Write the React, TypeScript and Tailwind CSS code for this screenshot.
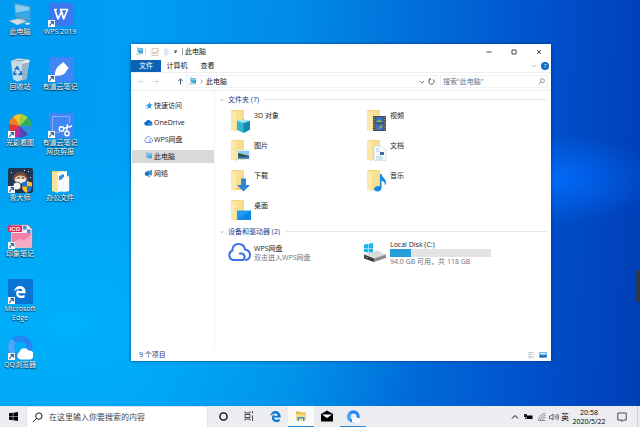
import type { ReactNode } from 'react';

type Item = {
  label: string;
  icon: ReactNode;
  shortcut?: boolean;
};

function PcIcon({ className }: { className: string }) {
  return (
    <svg viewBox="0 0 24 24" className={className}>
      <path d="M6 1 21.500 4v14L7 14z" fill="#5c9fc4" />
      <path d="M7 2.500 20.500 5v11.500L8 13z" fill="#39a9e6" />
      <path d="M7 2.500 20.500 5v3L7.400 10z" fill="#86cdf0" />
      <path d="m12 15 4 1v2.500l-4-1z" fill="#7ba3b9" />
      <path d="m1 18 9-2 8 2.500-9 3.500z" fill="#dfe7eb" stroke="#93aebd" strokeWidth=".6" />
      <path d="M4 18.200 11 17M6.500 19.500l7-1.800M9 20.500l6-2" stroke="#a8bcc7" strokeWidth=".5" />
      <path d="m16 20.500 4-1 1.500 1.500-3.500 1z" fill="#dce8ee" />
    </svg>
  );
}

function RecycleIcon() {
  return (
    <svg viewBox="0 0 25 25" className="size-[25px]">
      <path d="M3 4 21 5.500 18.500 22 9 24.500 5 22z" fill="#c5dce9" />
      <path d="M14 5h7l-2.500 17-4.500 1.500z" fill="#96b5c8" />
      <path d="m3 4 7-2.500L22 3l-1 2.500-7 1.500z" fill="#e7f0f4" stroke="#a4b9c4" strokeWidth=".6" />
      <path d="m6 4 4-1.500L18 3.500 13 5z" fill="#9db0ba" />
      <path d="m7 13 2-3 2 3M12.500 14l1 3-3 .5M8.500 17.500 6 17l.8-3" fill="none" stroke="#1672c4" strokeWidth="1.800" />
    </svg>
  );
}

function WpsIcon() {
  return (
    <svg viewBox="0 0 25 25" className="size-[25px]">
      <rect x="1" y="1" width="24" height="23" rx="1.500" fill="#3b78f0" />
      <path d="M6 7.500h3M6.800 7.500l3.200 9.500 3.600-7.500 2 7.500L19.500 7.500h-7l1.500 3" fill="none" stroke="#fff" strokeWidth="1.700" strokeLinejoin="round" />
    </svg>
  );
}

function NoteIcon() {
  return (
    <svg viewBox="0 0 25 25" className="size-[25px]">
      <rect x="1" width="24" height="25" rx="1" fill="#4285f4" />
      <path d="M7 18.500c-.3-4 1-7 3.500-9.500l5-4 5 6-3.500 5c-2.500 2.500-5.500 3-10 2.500z" fill="#fff" />
    </svg>
  );
}

function PinwheelIcon() {
  return (
    <svg viewBox="0 0 25 25" className="size-[25px]">
      <path d="M12 13 5 3.500A12 12 0 0 1 13 1z" fill="#f7c51e" />
      <path d="M12 13 13 1a12 12 0 0 1 7 3.500z" fill="#a5d32f" />
      <path d="m12 13 8-8.500A12 12 0 0 1 24 13z" fill="#2eae5a" />
      <path d="M12 13h12a12 12 0 0 1-4 8.500z" fill="#2b8fe2" />
      <path d="m12 13 8 8.500A12 12 0 0 1 11 24.500z" fill="#5147b5" />
      <path d="m12 13-1 11.500A12 12 0 0 1 3 20z" fill="#c3279a" />
      <path d="m12 13-9 7a12 12 0 0 1-2-9z" fill="#e8352f" />
      <path d="M12 13 1 11a12 12 0 0 1 4-7.500z" fill="#f57d20" />
    </svg>
  );
}

function ClipIcon() {
  return (
    <svg viewBox="0 0 25 25" className="size-[25px]">
      <rect x="1" width="24" height="25" rx="1" fill="#4285f4" />
      <path d="M21.500 10V3.500H4.500v16h7" fill="none" stroke="#a3c4fb" strokeWidth=".7" />
      <g fill="none" stroke="#fff" strokeWidth="1.400">
        <circle cx="13.500" cy="16" r="2.300" />
        <circle cx="19" cy="20.500" r="2.200" />
        <path d="m15.500 15.500 8.500-2.500M18.500 18.500 19.500 11" />
      </g>
    </svg>
  );
}

function MasterIcon() {
  return (
    <svg viewBox="0 0 25 25" className="size-[25px]">
      <rect width="25" height="25" rx="2" fill="#203651" />
      <path d="M3 4h1v1H3zM20 3h1v1h-1zM6 8h1v1H6zM22 9h1v1h-1zM16 2h1v1h-1z" fill="#dfeaf5" />
      <path d="M5 12c0-5 3-8 7.500-8S20 7 20 12z" fill="#7b4a35" />
      <ellipse cx="12.500" cy="11.500" rx="6" ry="4" fill="#e7c5a6" />
      <path d="M7 12c2-1.500 9-1.500 11 0-1 4-10 4-11 0z" fill="#f2efe9" />
      <path d="M9.500 9.500h2v1h-2zM14 9.500h2v1h-2z" fill="#2b2b2b" />
      <circle cx="9" cy="18" r="4" fill="#f4f4f4" stroke="#2b2b2b" strokeWidth=".7" />
      <path d="M14 14.500 19 13v5.500h-5z" fill="#1b76d1" />
      <path d="m19 13 5 1.500v4h-5z" fill="#f5bf2d" />
      <path d="M14 18.500h5V25c-3-1-5-3-5-6.500z" fill="#f5bf2d" />
      <path d="M19 18.500h5c0 3.500-2 5.500-5 6.500z" fill="#1b76d1" />
    </svg>
  );
}

function PictureFileIcon() {
  return (
    <svg viewBox="0 0 25 25" className="size-[25px]">
      <path d="M3 1h17l4 4v19H3z" fill="#f3e6ee" stroke="#9d8591" strokeWidth=".7" />
      <path d="M4 9h19v13.500H4z" fill="#ef82a6" />
      <path d="m4 19 7-4 5 1 7-5v11.500H4z" fill="#f6aac3" />
      <path d="M15 2h3.500v3.500H15zM19 5.500h3.500V9H19z" fill="#3f8edb" />
      <rect y="1.500" width="14" height="6.500" rx="1" fill="#e3225b" />
      <text x="1.500" y="7" className="fill-white font-['Liberation_Sans',sans-serif] text-[6px] font-bold">ICO</text>
    </svg>
  );
}

function EdgeGlyph({ className, color }: { className: string; color: string }) {
  return (
    <svg viewBox="0 0 24 24" className={className}>
      <path
        fill={color}
        d="M.48 10.840C1.290 4.400 5.700.03 12.200 0c3.930-.08 7.150 1.850 9.070 5.240 1.930 3.540 2.020 5.010 2.020 9.170H8.460c.07 6.020 8.870 5.800 12.700 3.170v4.940c-2.230 1.340-7.260 2.520-11.200 1-3.340-1.250-5.710-4.740-5.680-8.120-.13-4.370 2.190-7.280 5.680-8.890-.74.920-1.300 1.900-1.600 3.700h8.330c.49-4.950-4.690-4.950-4.690-4.950C7.080 5.440 3.560 7.250.48 10.840z"
      />
    </svg>
  );
}

function EdgeIcon() {
  return (
    <span className="flex size-[25px] items-center justify-center bg-[#0a74d6]">
      <EdgeGlyph className="size-3" color="#fff" />
    </span>
  );
}

function QQIcon({ className }: { className: string }) {
  return (
    <svg viewBox="0 0 25 25" className={className}>
      <circle cx="12.500" cy="12.500" r="9" fill="none" stroke="#2386f5" strokeWidth="6" />
      <path d="M6 19A9 9 0 0 1 6 6" fill="none" stroke="#49a8fa" strokeWidth="6" />
      <path d="M12 24.500a4 4 0 0 1-.5-7.500 5 5 0 0 1 9-1.500 4.500 4.500 0 0 1 1.500 9z" fill="#fff" />
    </svg>
  );
}

function OfficeFolderIcon() {
  return (
    <svg viewBox="0 0 25 25" className="size-[25px]">
      <path d="M4 3h12v20H4z" fill="#f4d477" />
      <path d="M9 4.500 19 3v20l-10 1z" fill="#fff" />
      <path d="m11 8 5-2v4l-5 2.500z" fill="#2f8fdb" />
      <path d="M15 9.500 21 8v15l-6 1z" fill="#fafcfd" stroke="#d6dde0" strokeWidth=".5" />
      <path d="m4 3 6 3v19l-6-2z" fill="#f9e29c" />
    </svg>
  );
}

const desktopItems: Item[] = [
  { label: '此电脑', icon: <PcIcon className="size-[25px]" /> },
  { label: '回收站', icon: <RecycleIcon /> },
  { label: '光影看图', icon: <PinwheelIcon />, shortcut: true },
  { label: '鲁大师', icon: <MasterIcon />, shortcut: true },
  { label: '印象笔记', icon: <PictureFileIcon />, shortcut: true },
  { label: 'Microsoft Edge', icon: <EdgeIcon />, shortcut: true },
  { label: 'QQ浏览器', icon: <QQIcon className="size-[25px]" />, shortcut: true },
  { label: 'WPS 2019', icon: <WpsIcon />, shortcut: true },
  { label: '有道云笔记', icon: <NoteIcon />, shortcut: true },
  { label: '有道云笔记网页剪报', icon: <ClipIcon />, shortcut: true },
  { label: '办公文件', icon: <OfficeFolderIcon /> },
];

function DesktopIcon({ item }: { item: Item }) {
  return (
    <button type="button" className="flex min-h-0 w-10 flex-col items-center">
      <span className="relative block">
        {item.icon}
        {item.shortcut ? (
          <svg viewBox="0 0 8 8" className="absolute bottom-0 left-0 size-[7px]">
            <path d="M0 0h8v8H0z" fill="#fff" />
            <path d="M2 7c0-2 .5-3 2.500-3.500M3 1.500h3.500V5z" fill="#17579c" stroke="#17579c" strokeWidth=".8" />
          </svg>
        ) : null}
      </span>
      <span className="text-center text-[7px] leading-[9px] text-white [text-shadow:0_1px_1px_rgba(0,0,0,0.8),0_0_2px_rgba(0,0,0,0.6)]">
        {item.label}
      </span>
    </button>
  );
}

function CloudIcon({ className, strokeWidth }: { className: string; strokeWidth: number }) {
  return (
    <svg viewBox="0 0 24 24" className={className} fill="none" stroke="#3d71e8" strokeWidth={strokeWidth} strokeLinecap="round" strokeLinejoin="round">
      <path d="M15.500 20H6a5 5 0 0 1-.5-9.500C5 6.500 8 4 11.500 4c3.500 0 6 2 6.500 5.500 3 .5 5 2.500 5 5.500s-1.500 4.500-4 5" />
      <path d="M13 13.500c3-.5 4.500 1 4.500 3.500 0 2-1 3-2 3" />
    </svg>
  );
}

const navItems: Item[] = [
  {
    label: '快速访问',
    icon: (
      <svg viewBox="0 0 9 9" className="size-[9px]">
        <path d="m5.500 1 .8 2.300 2.400.2-1.900 1.600.6 2.600-2-1.200-2 1.400.5-2.600L2 3.800l2.500-.3z" fill="#1f95dd" />
        <path d="M1 5h2M1.500 7h1.500" stroke="#6cbcee" strokeWidth=".7" />
      </svg>
    ),
  },
  {
    label: 'OneDrive',
    icon: (
      <svg viewBox="0 0 9 9" className="size-[9px]">
        <path d="M2.500 7.500a2 2 0 0 1-.5-4 2.500 2.500 0 0 1 4.500-.2A2.200 2.200 0 0 1 7 7.500z" fill="#0f69bd" />
        <path d="m2.500 7.500 3-3.200 3 1.500C8.700 7 8 7.500 7 7.500z" fill="#2a95e4" />
      </svg>
    ),
  },
  { label: 'WPS网盘', icon: <CloudIcon className="size-[9px]" strokeWidth={2} /> },
  { label: '此电脑', icon: <PcIcon className="size-[9px]" /> },
  {
    label: '网络',
    icon: (
      <svg viewBox="0 0 9 9" className="size-[9px]">
        <path d="m3 2 5-1v5.500L3 6z" fill="#3d9bd9" />
        <circle cx="3" cy="4.800" r="2.200" fill="#2271b5" />
        <path d="m4.500 6.500 2 .5-1 1.500-2-.5z" fill="#8bb6d0" />
      </svg>
    ),
  },
];

function FolderIcon({ children }: { children: ReactNode }) {
  return (
    <svg viewBox="0 0 24 24" className="size-6 shrink-0">
      <path d="M4 1h13v20H4z" fill="#f5d478" />
      <path d="M7 2h9.500v17H7z" fill="#f9df92" />
      <path d="m4 1 5 3v19l-2-1.500L4 20z" fill="#fbe8ae" />
      {children}
    </svg>
  );
}

const folders: Item[] = [
  {
    label: '3D 对象',
    icon: (
      <FolderIcon>
        <path d="m10 12 6-1.500 7 1.500v8.500L16.500 24 10 21z" fill="#35b6cf" />
        <path d="m10 12 6-1.500 7 1.500-6.500 2z" fill="#a4eaf1" />
        <path d="M16.500 14 23 12v8.500L16.500 24z" fill="#1189a8" />
      </FolderIcon>
    ),
  },
  {
    label: '视频',
    icon: (
      <FolderIcon>
        <path d="M10 7h13v15H10z" fill="#4b4d54" />
        <path d="M12.500 8h8v6h-8z" fill="#3567b5" />
        <path d="M12.500 15h8v6h-8z" fill="#3f6fb8" />
        <path d="m13 13 3-3 4 3zM15 20l3-4 2 2z" fill="#91a64b" />
        <path d="M11 8v13M22 8v13" stroke="#a5a8ae" strokeWidth="1" strokeDasharray="1 1" />
      </FolderIcon>
    ),
  },
  {
    label: '图片',
    icon: (
      <FolderIcon>
        <path d="M10 11h13v9.500H10z" fill="#edf6fb" stroke="#c8d6de" strokeWidth=".4" />
        <path d="M11 12h11v5H11z" fill="#8ecbf3" />
        <path d="m11 14 4 1 7 2v2.500H11z" fill="#32594f" />
        <path d="M11 18h11v1.500H11z" fill="#3b79bd" />
      </FolderIcon>
    ),
  },
  {
    label: '文档',
    icon: (
      <FolderIcon>
        <path d="M11 7h7l5 4v10.500H11z" fill="#f7fbfe" stroke="#c5d7e3" strokeWidth=".6" />
        <path d="M13 10h3M13 12h4M13 18h7M13 20h7" stroke="#8fc0e4" strokeWidth=".8" />
        <path d="M17 13h4v3h-4z" fill="#3c6f9f" />
      </FolderIcon>
    ),
  },
  {
    label: '下载',
    icon: (
      <FolderIcon>
        <path d="M14 9.500h5v6.500h4l-6.500 6.500L10 16h4z" fill="#2e86d8" />
      </FolderIcon>
    ),
  },
  {
    label: '音乐',
    icon: (
      <FolderIcon>
        <path d="M17 5h1.500c0 3 4.500 4.500 4.500 8.500 0 1.500-.5 2.500-1 3 .3-3-1.500-4-3.500-5V19c0 2-1.800 3.500-4 3.500S11 21.500 11 20s2-3 4-3c.8 0 1.500 0 2 .3z" fill="#1789e0" />
      </FolderIcon>
    ),
  },
  {
    label: '桌面',
    icon: (
      <FolderIcon>
        <path d="M10 11.500h14V21H10z" fill="#1b9cf0" />
        <path d="m10 21 14-9.500V21z" fill="#0d88e2" />
      </FolderIcon>
    ),
  },
];

function DriveIcon() {
  return (
    <svg viewBox="0 0 24 24" className="size-6 shrink-0">
      <path d="m1 4.500 4-.6v4H1zM5.500 3.800 10 3v4.900H5.500zM1 8.400h4v4l-4-.6zM5.500 8.400H10v4.900l-4.500-.8z" fill="#1cb4ee" />
      <path d="m1 14.500 13-4 9 4-12 4.500z" fill="#dcdcdc" />
      <path d="m1 14.500 10 4V22L1 18.500z" fill="#3a3a3a" />
      <path d="m11 18.500 12-4V18l-12 4z" fill="#8d8d8d" />
      <path d="M3 17.500h1.500" stroke="#72e35a" strokeWidth="1" />
    </svg>
  );
}

function Chevron({ className }: { className: string }) {
  return (
    <svg viewBox="0 0 8 8" className={className} fill="none" stroke="currentColor">
      <path d="m1 2.500 3 3 3-3" />
    </svg>
  );
}

function SearchIcon({ className }: { className: string }) {
  return (
    <svg viewBox="0 0 12 12" className={className} fill="none" stroke="currentColor">
      <circle cx="7.500" cy="4.500" r="3.500" />
      <path d="M5 7 1 11" />
    </svg>
  );
}

function Arrow({ className }: { className: string }) {
  return (
    <svg viewBox="0 0 8 8" className={className} fill="none" stroke="currentColor">
      <path d="M7.500 4H1M3.500 1.500 1 4l2.500 2.500" />
    </svg>
  );
}

function SectionHeader({ title }: { title: string }) {
  return (
    <h2 className="flex h-[9px] items-center gap-1 pl-1 text-[#1f3a8c]">
      <Chevron className="size-1 text-gray-500" />
      <span>{title}</span>
      <span className="ml-px h-px flex-1 bg-[#e6e8ec]" />
    </h2>
  );
}

function TitleBar() {
  return (
    <header className="flex h-[15px] shrink-0 items-center pl-1">
      <PcIcon className="size-[9px]" />
      <span className="ml-px h-[7px] w-px bg-gray-300" />
      <svg viewBox="0 0 8 8" className="ml-[5px] size-2">
        <path d="M1 .5h6v7H1z" fill="#fff" stroke="#b9b0aa" strokeWidth=".6" />
        <path d="m2 4 1.500 2L7 2.500" fill="none" stroke="#d9813d" />
      </svg>
      <svg viewBox="0 0 8 8" className="ml-[3px] size-2">
        <path d="M2 .5h4v7H2z" fill="#dbe6f6" />
      </svg>
      <svg viewBox="0 0 6 6" className="ml-[3px] size-[5px]">
        <path d="M1 1.500h4v.5H1zM1 3h4L3 5z" fill="#222" />
      </svg>
      <span className="ml-1 h-[7px] w-px bg-gray-400" />
      <h1 className="ml-[2px] flex-1">此电脑</h1>
      <button type="button" aria-label="最小化" className="flex w-[25px] justify-center">
        <svg viewBox="0 0 6 6" className="size-1.5" stroke="#222" strokeWidth=".8"><path d="M.5 3h5" /></svg>
      </button>
      <button type="button" aria-label="最大化" className="flex w-[25px] justify-center">
        <svg viewBox="0 0 6 6" className="size-1.5" fill="none" stroke="#222" strokeWidth=".8"><path d="M1 1h4v4H1z" /></svg>
      </button>
      <button type="button" aria-label="关闭" className="flex w-[25px] justify-center">
        <svg viewBox="0 0 6 6" className="size-1.5" stroke="#222" strokeWidth=".8"><path d="m1 1 4 4M5 1 1 5" /></svg>
      </button>
    </header>
  );
}

function Ribbon() {
  return (
    <div className="flex h-[14px] shrink-0 items-center border-b border-[#eceef0]">
      <button type="button" className="h-3 w-[30px] bg-[#0c62b4] text-white">文件</button>
      <button type="button" className="w-8">计算机</button>
      <button type="button" className="w-[29px]">查看</button>
      <span className="flex-1" />
      <Chevron className="mr-1 size-1.5 text-gray-400" />
      <button type="button" aria-label="帮助" className="mr-[2px] flex size-2 items-center justify-center rounded-full bg-[#0b6fc4] text-[6px] leading-none text-white">
        ?
      </button>
    </div>
  );
}

function AddressBar() {
  return (
    <div className="flex h-[18px] shrink-0 items-center border-b border-[#eceef0] py-[2px] pr-[3px] pl-[7px]">
      <button type="button" aria-label="后退"><Arrow className="size-[7px] text-gray-300" /></button>
      <button type="button" aria-label="前进" className="ml-[7px]"><Arrow className="size-[7px] rotate-180 text-gray-300" /></button>
      <Chevron className="ml-[7px] size-1 text-gray-300" />
      <button type="button" aria-label="上移" className="ml-[7px]"><Arrow className="size-[7px] rotate-90 text-gray-700" /></button>
      <div className="ml-[2px] flex h-full flex-1 items-center border border-[#f1f2f3] px-px">
        <PcIcon className="size-[9px]" />
        <Chevron className="mx-[2px] size-[5px] -rotate-90 text-gray-600" />
        <span className="flex-1">此电脑</span>
        <Chevron className="size-1.5 text-gray-700" />
        <button type="button" aria-label="刷新" className="ml-[3px]">
          <svg viewBox="0 0 8 8" className="size-[7px]" fill="none" stroke="#444">
            <path d="M5.500 1.500A3 3 0 1 1 2.500 1.500M2.500 0v2H.8" />
          </svg>
        </button>
      </div>
      <label className="ml-[3px] flex h-full w-[108px] items-center border border-[#f1f2f3] pr-[2px] pl-[2px] text-gray-600">
        <input type="text" aria-label="搜索" placeholder='搜索"此电脑"' className="min-w-0 flex-1 outline-none placeholder:text-gray-500" />
        <SearchIcon className="size-[7px]" />
      </label>
    </div>
  );
}

function ExplorerWindow() {
  return (
    <section className="absolute top-[44px] right-[89px] bottom-[45px] left-[131px] flex flex-col bg-white text-[7px] leading-[9px] text-[#222] shadow-[0_0_3px_rgba(0,30,90,0.7)]">
      <TitleBar />
      <Ribbon />
      <AddressBar />
      <div className="flex min-h-0 flex-1">
        <nav className="flex w-[84px] shrink-0 flex-col gap-1 border-r border-[#f3f4f6] pt-2 pl-px">
          {navItems.map((item) => (
            <button
              key={item.label}
              type="button"
              className={`flex h-[13px] items-center gap-px pl-3 text-left ${item.label === '此电脑' ? 'bg-[#d9d9d9]' : ''}`}
            >
              {item.icon}
              {item.label}
            </button>
          ))}
        </nav>
        <main className="min-w-0 flex-1 pt-1 pr-1 pl-px">
          <SectionHeader title="文件夹 (7)" />
          <ul className="grid auto-rows-[30px] grid-cols-[136px_136px] pt-[3px] pl-[11px]">
            {folders.map((item) => (
              <li key={item.label} className="flex gap-[3px] pt-[2px]">
                {item.icon}
                <span className="pt-[2px]">{item.label}</span>
              </li>
            ))}
          </ul>
          <SectionHeader title="设备和驱动器 (2)" />
          <ul className="grid grid-cols-[136px_136px] pt-1 pl-[11px]">
            <li className="flex gap-[3px]">
              <CloudIcon className="size-6 shrink-0" strokeWidth={2} />
              <div className="pt-1">
                <p>WPS网盘</p>
                <p className="text-gray-500">双击进入WPS网盘</p>
              </div>
            </li>
            <li className="flex gap-[3px]">
              <DriveIcon />
              <div>
                <p>Local Disk (C:)</p>
                <div className="h-2 w-[101px] bg-[#e3e3e3]">
                  <div className="h-full bg-[#26a0da]" style={{ width: `${((118 - 94) / 118) * 100}%` }} />
                </div>
                <p className="text-gray-500">94.0 GB 可用，共 118 GB</p>
              </div>
            </li>
          </ul>
        </main>
      </div>
      <footer className="flex h-[13px] shrink-0 items-center gap-1 pr-1 pl-2 text-[#1f3a6c]">
        <span className="flex-1">9 个项目</span>
        <button type="button" aria-label="详细信息">
          <svg viewBox="0 0 8 8" className="size-2" stroke="#c3c8ce" strokeWidth=".8"><path d="M1 1.500h6M1 3.500h6M1 5.500h6M1 7h6M3 1v6" /></svg>
        </button>
        <button type="button" aria-label="大图标">
          <svg viewBox="0 0 8 8" className="size-2">
            <path d="M0 1h8v6H0z" fill="#6bb5ea" />
            <path d="M1 2h6v1H1z" fill="#e3f2fc" />
            <path d="m1 4 3 1 3-1v2H1z" fill="#174f87" />
          </svg>
        </button>
      </footer>
    </section>
  );
}

function TaskButton({ label, open, active, children }: { label: string; open?: boolean; active?: boolean; children: ReactNode }) {
  return (
    <button
      type="button"
      aria-label={label}
      className={`flex h-full w-[26px] items-center justify-center border-b ${open ? 'border-[#2b87d8]' : 'border-transparent'} ${active ? 'bg-[#fafafa]' : ''}`}
    >
      {children}
    </button>
  );
}

function Taskbar() {
  return (
    <footer className="flex h-[21px] shrink-0 items-center bg-[#ebedf0] text-black">
      <button type="button" aria-label="开始" className="flex h-full w-[26px] items-center justify-center">
        <svg viewBox="0 0 10 10" className="size-[9px]">
          <path d="m0 1.500 4.200-.7v3.900H0zM4.800.7 10 0v4.700H4.800zM0 5.300h4.200v3.900L0 8.500zM4.800 5.300H10V10l-5.200-.7z" />
        </svg>
      </button>
      <label className="flex h-full w-[182px] items-center gap-1.5 border border-b-0 border-[#dfe1e4] bg-white pl-[5px]">
        <SearchIcon className="size-[11px]" />
        <input type="text" aria-label="搜索" placeholder="在这里输入你要搜索的内容" className="min-w-0 flex-1 text-[8px] leading-3 outline-none placeholder:text-[#444]" />
      </label>
      <div className="flex h-full pl-[2px]">
        <TaskButton label="Cortana">
          <svg viewBox="0 0 10 10" className="size-[9px]" fill="none" stroke="#000" strokeWidth="1.500"><circle cx="5" cy="5" r="4" /></svg>
        </TaskButton>
        <TaskButton label="任务视图">
          <svg viewBox="0 0 10 10" className="size-[10px]" fill="none" stroke="#222" strokeWidth=".8">
            <path d="M1 .5V2h5V.5M1 3.500h5v3H1zM1 9.500V8h5v1.500M8.500 0v2.500M8.500 4.500V10" />
          </svg>
        </TaskButton>
        <TaskButton label="Microsoft Edge">
          <EdgeGlyph className="size-[11px]" color="#0a78d4" />
        </TaskButton>
        <TaskButton label="文件资源管理器" open active>
          <svg viewBox="0 0 12 12" className="size-3">
            <path d="M1 1.500h4l1 1h5v7.500H1z" fill="#e9b63c" />
            <path d="M1 4h10v6.500H1z" fill="#fbdc7b" />
            <path d="M2.500 11V7h7v4H8V8.500H4V11z" fill="#3a94dc" />
          </svg>
        </TaskButton>
        <TaskButton label="邮件">
          <svg viewBox="0 0 12 12" className="size-3">
            <path d="m0 4 6-3.500L12 4v7.500H0z" />
            <path d="M1 4.500h10L6 8z" fill="#fff" />
          </svg>
        </TaskButton>
        <TaskButton label="QQ浏览器" open>
          <QQIcon className="size-[13px]" />
        </TaskButton>
      </div>
      <div className="ml-auto flex h-full items-center">
        <Chevron className="size-2 rotate-180" />
        <svg viewBox="0 0 9 8" className="ml-[5px] h-2 w-[9px]">
          <path d="M2.500 2.500h6v3.500h-6z" />
          <path d="M0 1h3v3H0zM1 4v2h2" fill="#222" />
        </svg>
        <svg viewBox="0 0 8 8" className="ml-[5px] size-2" fill="none" stroke="#555" strokeWidth=".6">
          <path d="M.5 7.500A7 7 0 0 1 7.500.5M2.500 7.500a5 5 0 0 1 5-5M4.500 7.500a3 3 0 0 1 3-3M.5 7.500h7" />
        </svg>
        <svg viewBox="0 0 10 8" className="ml-[3px] h-2 w-[10px]" fill="none" stroke="#333" strokeWidth=".7">
          <path d="M.5 3v2.500H2L4 7V1L2 3zM5.500 2.500c1 1 1 2 0 3M7 1.500c1.500 1.500 1.500 3.500 0 5M8.500.8c1.500 2 1.500 4.500 0 6.500" />
        </svg>
        <span className="ml-[2px] text-[8px] leading-3">英</span>
        <time className="ml-[2px] w-9 text-center text-[7px] leading-[9px]">
          20:58
          <br />
          2020/5/22
        </time>
        <button type="button" aria-label="通知" className="ml-[10px]">
          <svg viewBox="0 0 10 10" className="size-[10px]" fill="none" stroke="#222" strokeWidth=".8"><path d="M.8 1h8.400v7H6.500L5 9.500V8H.8z" /></svg>
        </button>
        <span className="mr-[2px] ml-[10px] h-full w-px bg-[#cdd0d4]" />
      </div>
    </footer>
  );
}

export default function App() {
  return (
    <div className="flex h-screen flex-col overflow-hidden font-['Open_Sans','Noto_Sans_CJK_SC',sans-serif]">
      <div className="relative min-h-0 flex-1 bg-[radial-gradient(ellipse_at_86%_44%,rgba(0,110,255,0.9)_0%,rgba(0,100,245,0)_14%),radial-gradient(ellipse_at_10%_80%,rgba(0,190,255,0.6)_0%,rgba(0,180,255,0)_45%),linear-gradient(93deg,#009cf2_0%,#009df3_22%,#008ae6_46%,#006ad8_66%,#0050ca_84%,#003eb6_100%)]">
        <div className="grid h-full grid-flow-col grid-cols-[40px_40px] grid-rows-7 pt-[2px] pb-4">
          {desktopItems.map((item) => (
            <DesktopIcon key={item.label} item={item} />
          ))}
        </div>
        <ExplorerWindow />
        <div className="absolute top-[270px] right-0 h-8 w-[5px] rounded-l-sm bg-[#2c3a4d]" />
      </div>
      <Taskbar />
    </div>
  );
}
